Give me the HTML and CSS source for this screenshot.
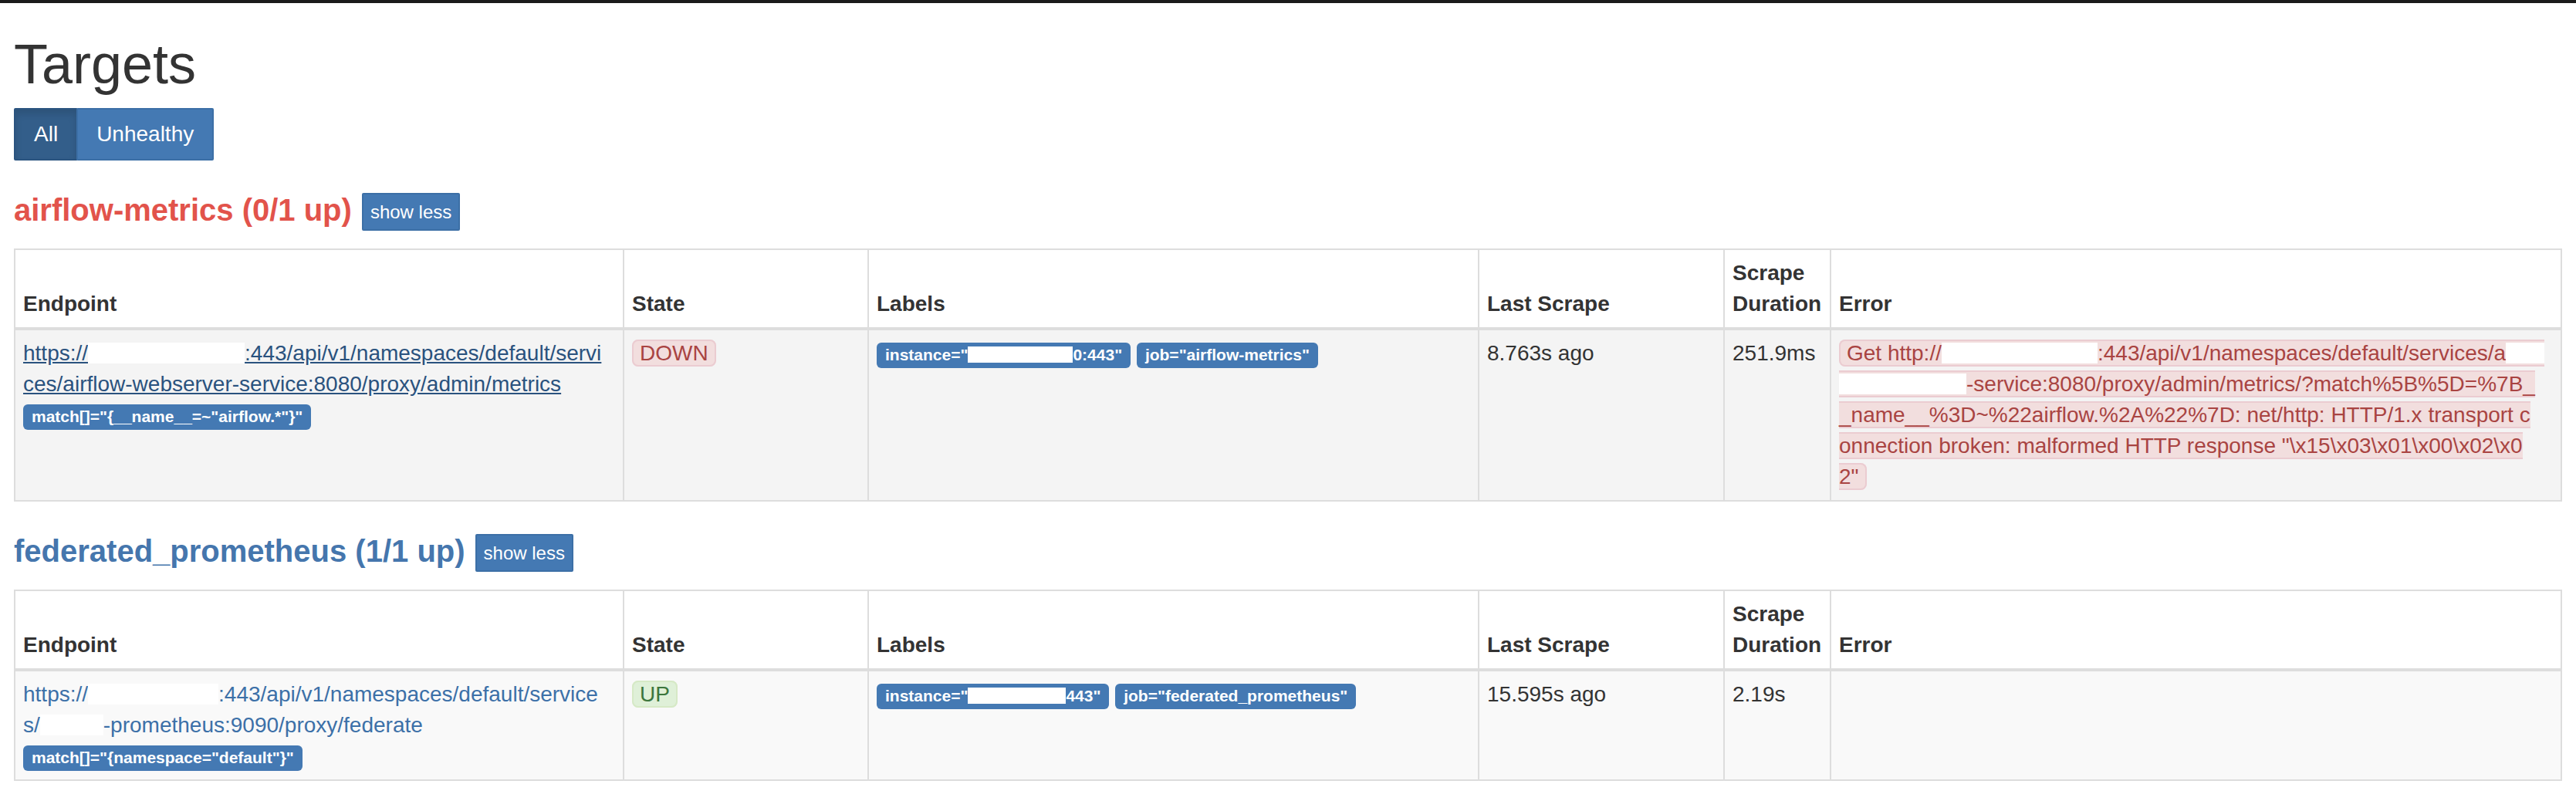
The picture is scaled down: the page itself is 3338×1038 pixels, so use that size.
FILE: index.html
```html
<!DOCTYPE html>
<html lang="en">
<head>
    <meta charset="UTF-8">
    <title>Prometheus Time Series Collection and Processing Server</title>
    <link rel="stylesheet" href="styles.css">
</head>
<body>
<div class="topbar"></div>
<div class="container">
    <h1>Targets</h1>
    <div class="btn-group">
        <button class="btn active">All</button>
        <button class="btn">Unhealthy</button>
    </div>

    <!-- job: airflow-metrics -->
    <section class="job">
        <div class="job-head">
            <h2 class="job-title down">airflow-metrics (0/1 up)</h2>
            <button class="btn btn-xs">show less</button>
        </div>
        <table class="targets">
            <colgroup>
                <col class="col-endpoint">
                <col class="col-state">
                <col class="col-labels">
                <col class="col-last">
                <col class="col-duration">
                <col class="col-error">
            </colgroup>
            <thead>
            <tr>
                <th>Endpoint</th>
                <th>State</th>
                <th>Labels</th>
                <th>Last Scrape</th>
                <th>Scrape Duration</th>
                <th>Error</th>
            </tr>
            </thead>
            <tbody>
            <tr class="hover">
                <td class="endpoint">
                    <a href="#">https://<span class="redact" style="width: 203px"></span>:443/api/v1/namespaces/default/servi<br>ces/airflow-webserver-service:8080/proxy/admin/metrics</a><br>
                    <span class="label">match[]="{__name__=~"airflow.*"}"</span>
                </td>
                <td><span class="state down">DOWN</span></td>
                <td>
                    <span class="label">instance="<span class="redact" style="width: 136px"></span>0:443"</span>
                    <span class="label">job="airflow-metrics"</span>
                </td>
                <td>8.763s ago</td>
                <td>251.9ms</td>
                <td><span class="state down">Get http://<span class="redact" style="width: 202px"></span>:443/api/v1/namespaces/default/services/a<span class="redact" style="width: 50px"></span><br><span class="redact" style="width: 165px"></span>-service:8080/proxy/admin/metrics/?match%5B%5D=%7B_<br>_name__%3D~%22airflow.%2A%22%7D: net/http: HTTP/1.x transport c<br>onnection broken: malformed HTTP response "\x15\x03\x01\x00\x02\x0<br>2"</span></td>
            </tr>
            </tbody>
        </table>
    </section>

    <!-- job: federated_prometheus -->
    <section class="job">
        <div class="job-head">
            <h2 class="job-title up">federated_prometheus (1/1 up)</h2>
            <button class="btn btn-xs">show less</button>
        </div>
        <table class="targets">
            <colgroup>
                <col class="col-endpoint">
                <col class="col-state">
                <col class="col-labels">
                <col class="col-last">
                <col class="col-duration">
                <col class="col-error">
            </colgroup>
            <thead>
            <tr>
                <th>Endpoint</th>
                <th>State</th>
                <th>Labels</th>
                <th>Last Scrape</th>
                <th>Scrape Duration</th>
                <th>Error</th>
            </tr>
            </thead>
            <tbody>
            <tr class="striped">
                <td class="endpoint">
                    <a href="#">https://<span class="redact" style="width: 169px"></span>:443/api/v1/namespaces/default/service<br>s/<span class="redact" style="width: 82px"></span>-prometheus:9090/proxy/federate</a><br>
                    <span class="label">match[]="{namespace="default"}"</span>
                </td>
                <td><span class="state up">UP</span></td>
                <td>
                    <span class="label">instance="<span class="redact" style="width: 127px"></span>443"</span>
                    <span class="label">job="federated_prometheus"</span>
                </td>
                <td>15.595s ago</td>
                <td>2.19s</td>
                <td></td>
            </tr>
            </tbody>
        </table>
    </section>
</div>
</body>
</html>
```

FILE: styles.css
```css
body {
    margin: 0;
    font-family: "Liberation Sans", Arial, sans-serif;
    font-size: 28px;
    line-height: 40px;
    color: #333;
    background: #fff;
}
.topbar {
    height: 4px;
    background: #1b1b1b;
}
.container {
    padding: 0 20px 0 18px;
}
h1 {
    font-size: 72px;
    font-weight: 400;
    line-height: 79px;
    margin: 40px 0 17px;
}

/* buttons */
.btn-group {
    display: flex;
}
.btn {
    font-family: inherit;
    font-size: 28px;
    line-height: 40px;
    color: #fff;
    background: #4479b3;
    border: 2px solid #3c6fa6;
    border-radius: 2px;
    padding: 12px 24px;
    cursor: pointer;
}
.btn-group .btn + .btn {
    margin-left: -2px;
}
.btn-group .btn.active {
    background: #335e8a;
    border-color: #2b5480;
    box-shadow: inset 0 6px 10px rgba(0, 0, 0, 0.12);
}
.btn-xs {
    font-size: 24px;
    line-height: 35px;
    padding: 5px 9px;
}

/* job sections */
.job {
    margin-top: 42px;
}
.job-head {
    display: flex;
    align-items: flex-start;
    gap: 13px;
    margin-bottom: 23px;
}
.job-title {
    margin: 0;
    font-size: 40px;
    line-height: 44px;
    font-weight: 700;
}
.job-title.down {
    color: #e2534b;
}
.job-title.up {
    color: #4576ad;
}

/* targets table */
.targets {
    width: 3300px;
    border-collapse: collapse;
    table-layout: fixed;
}
.col-endpoint { width: 789px; }
.col-state { width: 317px; }
.col-labels { width: 791px; }
.col-last { width: 318px; }
.col-duration { width: 138px; }
.col-error { width: 947px; }
.targets th,
.targets td {
    border: 2px solid #ddd;
    padding: 10px;
    text-align: left;
}
.targets th {
    vertical-align: bottom;
    font-weight: 700;
    border-bottom-width: 4px;
}
.targets td {
    vertical-align: top;
}
.targets tr.hover td {
    background: #f4f4f4;
}
.targets tr.striped td {
    background: #f9f9f9;
}
.endpoint a {
    color: #3c70a8;
    text-decoration: none;
}
tr.hover .endpoint a {
    color: #2a527e;
    text-decoration: underline;
}

.label {
    display: inline-block;
    font-size: 21px;
    font-weight: 700;
    line-height: 1;
    color: #fff;
    background: #4479b3;
    padding: 5px 11px 7px;
    border-radius: 6px;
}
.state {
    border: 2px solid;
    border-radius: 8px;
    padding: 0 8px;
}
.state.down {
    color: #a94442;
    background: #f2dede;
    border-color: #ebccd1;
}
.state.up {
    color: #3c763d;
    background: #dff0d8;
    border-color: #d6e9c6;
}

/* blanked-out host names */
.redact {
    display: inline-block;
    height: 27px;
    vertical-align: -4px;
    background: #fff;
}
.label .redact {
    height: 21px;
    vertical-align: -3px;
}
```
